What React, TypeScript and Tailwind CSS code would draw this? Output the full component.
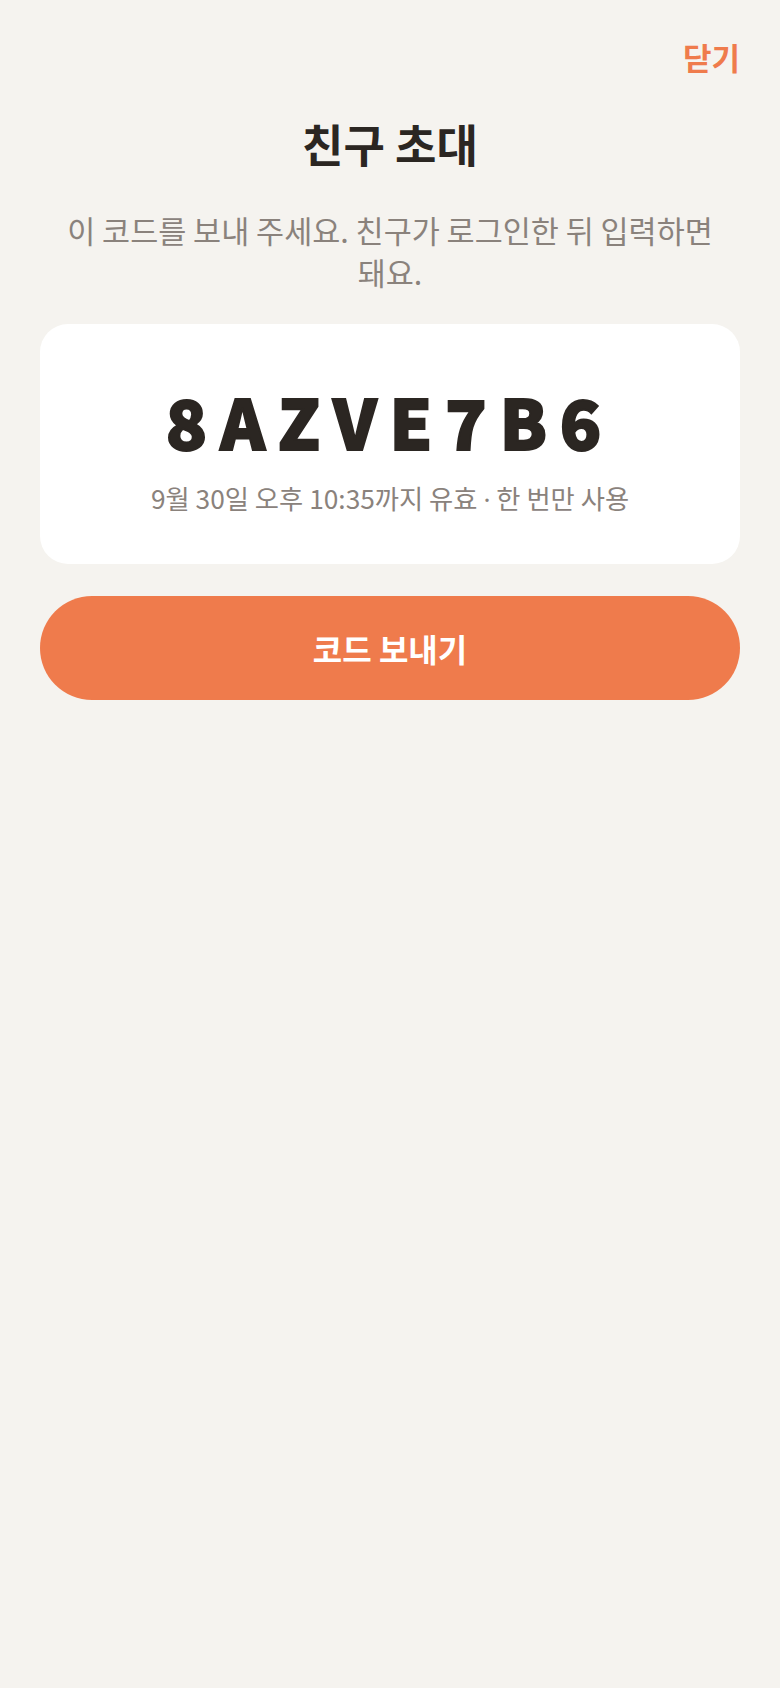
import React from "react";

const font = { fontFamily: '"Noto Sans CJK KR", "Noto Sans", sans-serif' };

export default function App() {
  return (
    <div
      className="min-h-[1688px] w-full bg-[#f5f3ef] px-10 text-[#2b2622]"
      style={font}
    >
      {/* top bar */}
      <div className="flex justify-end pt-[36px]">
        <button className="text-[31px] font-bold leading-[42px] text-[#ef7b4c]">
          닫기
        </button>
      </div>

      <h1 className="mt-[36px] text-center text-[45px] font-bold leading-[60px]">
        친구 초대
      </h1>

      <p className="mx-auto mt-[35px] max-w-[680px] text-center text-[30.5px] leading-[42px] text-[#8a827c]">
        이 코드를 보내 주세요. 친구가 로그인한 뒤 입력하면 돼요.
      </p>

      {/* code card */}
      <div className="mt-[31px] flex h-[240px] flex-col items-center rounded-[28px] bg-white pt-[57px]">
        <div className="text-[68px] font-black leading-[80px] tracking-[0.19em] [-webkit-text-stroke:2px_#2b2622]">
          8AZVE7B6
        </div>
        <div className="mt-[19px] text-[26.3px] leading-[36px] text-[#8a827c]">
          9월 30일 오후 10:35까지 유효{" "}
          <span style={{ fontFamily: '"Noto Sans", sans-serif' }}>·</span> 한
          번만 사용
        </div>
      </div>

      <button className="mt-[32px] flex h-[104px] w-full items-center justify-center rounded-full bg-[#ef7b4c] text-[32px] font-bold text-white">
        코드 보내기
      </button>
    </div>
  );
}
